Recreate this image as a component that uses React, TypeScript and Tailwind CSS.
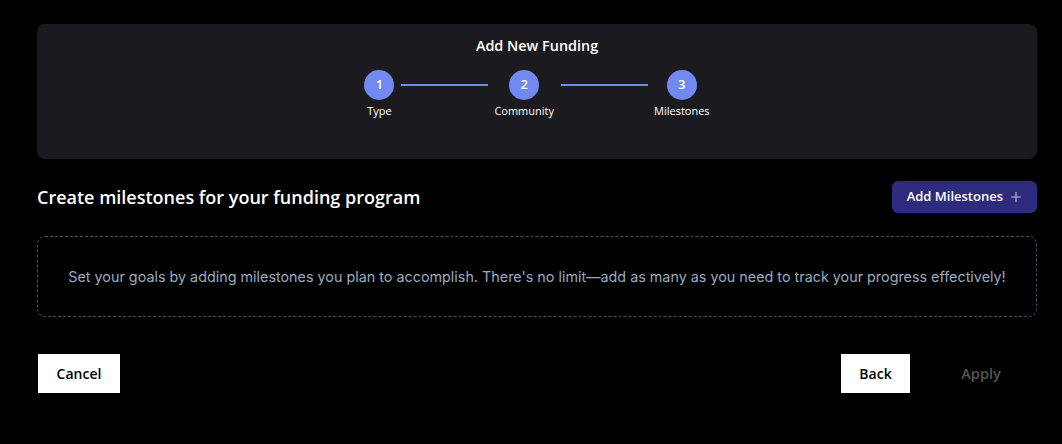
const steps = ["Type", "Community", "Milestones"];

function Stepper() {
  return (
    <div className="mt-[14px] flex items-start justify-center">
      {steps.map((s, i) => (
        <div key={s} className="flex items-start">
          {i > 0 && <div className="mx-[6.5px] mt-[14px] h-[2px] w-[87px] bg-[#7489f0]" />}
          <div className="flex flex-col items-center">
            <div className="flex h-[30px] w-[30px] items-center justify-center rounded-full bg-[#7189f0] text-[13px] font-semibold text-white">
              {i + 1}
            </div>
            <span className="mt-[3px] text-[11px] leading-[16px] text-white">{s}</span>
          </div>
        </div>
      ))}
    </div>
  );
}

export default function App() {
  return (
    <div className="min-h-[444px] bg-black pl-[37px] pr-[25px] pt-[24px] font-['Open_Sans',sans-serif]">
      <div className="h-[135px] rounded-lg bg-[#1b1b1f] pt-[12px]">
        <h1 className="text-center text-[14.4px] font-semibold leading-[20px] text-white">Add New Funding</h1>
        <Stepper />
      </div>

      <div className="mt-[22px] flex items-center justify-between">
        <h2 className="text-[18px] font-semibold text-white">Create milestones for your funding program</h2>
        <button className="flex h-[32px] items-center gap-[7px] rounded-md bg-[#2e2a7e] px-[15px] text-[13px] font-semibold text-white">
          Add Milestones
          <svg width="12" height="12" viewBox="0 0 12 12" className="text-[#b8b6d6]">
            <path d="M6 1v10M1 6h10" stroke="currentColor" strokeWidth="1.2" />
          </svg>
        </button>
      </div>

      <div className="mt-[23px] flex h-[81px] items-center justify-center rounded-lg border border-dashed border-[#454c63]">
        <p className="font-['Inter',sans-serif] text-[14.35px] text-[#9aabbf]">
          Set your goals by adding milestones you plan to accomplish. There's no limit—add as many as you need to track your progress effectively!
        </p>
      </div>

      <div className="mt-[37px] flex items-center justify-between">
        <button className="ml-px h-[39px] w-[82px] bg-white text-[14px] font-semibold text-black">Cancel</button>
        <div className="flex items-center">
          <button className="h-[39px] w-[69px] bg-white text-[14px] font-semibold text-black">Back</button>
          <button className="ml-[15px] h-[39px] w-[112px] text-[14.5px] font-semibold text-[#555555]">Apply</button>
        </div>
      </div>
    </div>
  );
}
